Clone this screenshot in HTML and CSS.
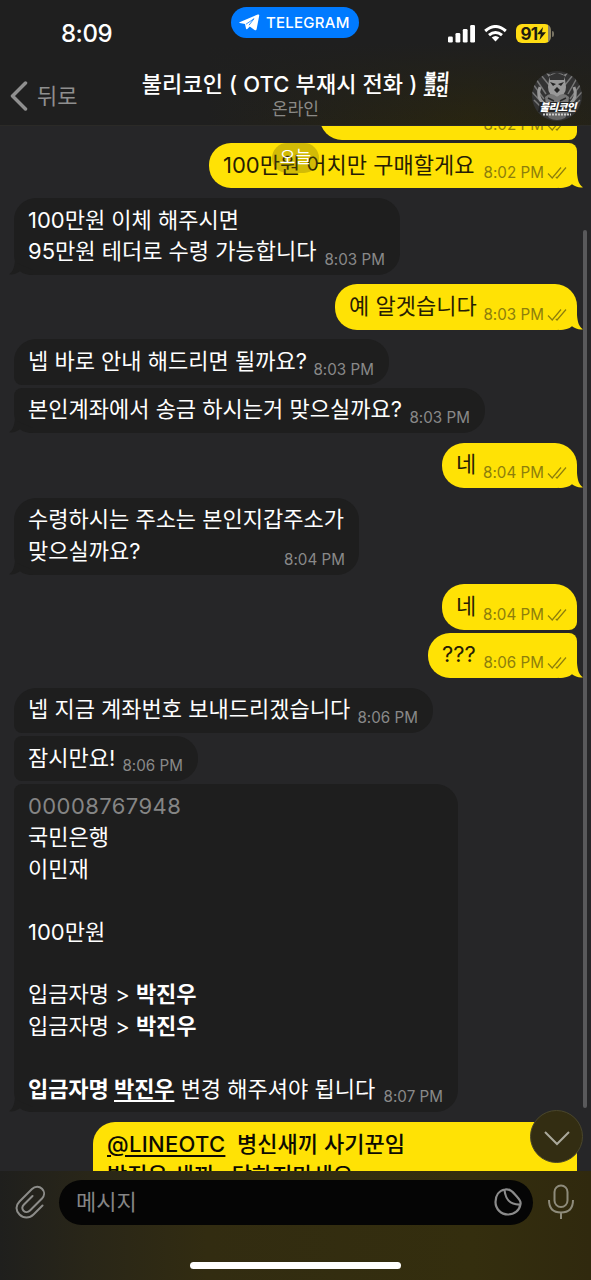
FILE: index.html
```html
<!DOCTYPE html>
<html lang="ko">
<head>
<meta charset="utf-8">
<title>불리코인</title>
<link rel="stylesheet" href="styles.css">
</head>
<body>
<svg width="0" height="0" class="defs">
  <defs>
    <symbol id="checks" viewBox="0 0 20 13"><path d="M1 7.5 5.2 12 14 1.5M8.8 10.8 10 12 19 1.5" fill="none" stroke="currentColor" stroke-width="1.2"/></symbol>
    <symbol id="tail" viewBox="0 0 24 22"><path d="M18 0V7C18.500 14 20 19 24 21.300C20 22 16 20.500 13 18.300C10 21 6 22 0 22V17L16 10V0Z" fill="currentColor"/></symbol>
  </defs>
</svg>
<div class="phone">
  <header class="header">
    <div class="status">
      <div class="clock">8:09</div>
      <div class="pill">
        <svg width="21" height="17" viewBox="0 0 21 17"><path d="M.5 8.200 18.800.500Q20.500 0 20.200 1.800L17.600 15.200Q17.200 17 15.500 15.900L10.800 12.400 8.300 15Q7.300 15.700 7 14.500L6 10 .8 9Q-.3 8.700.5 8.200Z" fill="#fff"/><path d="m7 10.200 8-5.500-5 6.500" fill="none" stroke="#007aff" stroke-width=".8"/></svg>
        <span>TELEGRAM</span>
      </div>
      <div class="indicators">
        <svg width="27" height="18" viewBox="0 0 27 18" fill="#fff"><rect x="0" y="11.500" width="4.800" height="6" rx="1.300"/><rect x="7.500" y="8" width="4.800" height="9.500" rx="1.300"/><rect x="14.800" y="4" width="4.800" height="13.500" rx="1.300"/><rect x="22.200" y="0" width="4.800" height="17.500" rx="1.300"/></svg>
        <svg width="23" height="17" viewBox="0 0 23 17" fill="none" stroke="#fff" stroke-width="3"><path d="M1.200 6Q11.500-3 21.800 6M5 10.200Q11.500 4.700 18 10.200"/><path d="M7.700 12.600Q11.500 9.500 15.300 12.600L11.500 16.600Z" fill="#fff" stroke="none"/></svg>
        <div class="battery"><span>91</span><svg width="9" height="13" viewBox="0 0 9 13"><path d="M6 0 0 7.200H3.800L2.500 13 9 5.300H5Z" fill="#1d1b10"/></svg></div>
      </div>
    </div>
    <div class="nav">
      <div class="back">
        <svg width="18" height="30" viewBox="0 0 18 30"><path d="M15.500 2 2.500 15 15.500 28" fill="none" stroke="#8f8f8f" stroke-width="3.500" stroke-linecap="round" stroke-linejoin="round"/></svg>
        <span>뒤로</span>
      </div>
      <div class="peer">
        <div class="name"><span>불리코인 ( OTC 부재시 전화 )</span><span class="brand">불리<br>코인</span></div>
        <div class="online">온라인</div>
      </div>
      <svg class="avatar" width="52" height="52" viewBox="0 0 52 52">
        <clipPath id="round"><circle cx="26" cy="26" r="25"/></clipPath>
        <g clip-path="url(#round)">
          <rect width="52" height="52" fill="#333"/>
          <g fill="none" stroke="#777" stroke-width="1.500"><path d="M2 14 13 29M5 9 15 24M50 14 39 29M46 8 37 24M1 22 12 34M51 22 40 34M10 5 18 15M42 5 34 15M3 30 10 37M49 30 42 37"/><path d="M9 17Q5 27 13 34M43 17Q47 27 39 34" stroke="#9a9a9a" stroke-width="3"/></g>
          <path d="M18 9Q19 2 26 4 33 2 34 9L35 17Q35 26 26 27 17 26 17 17Z" fill="#999"/>
          <path d="M18 7 15 3 20 5ZM34 7 37 3 32 5Z" fill="#888"/>
          <path d="M18 6Q26 1 34 6L33 10H19Z" fill="#333"/>
          <path d="M19 12 25 14 22 16ZM33 12 27 14 30 16ZM23 20 26 17 29 20 26 23Z" fill="#242424"/>
          <path d="M14 27Q20 21 26 27 32 21 38 27L37 35H15Z" fill="#777"/>
          <path d="M17 28 23 31M35 28 29 31" stroke="#292929" stroke-width="1.500"/>
          <path d="M9 32H43L46 42H7Z" fill="#222"/>
          <path d="M14 42H38L34 48Q26 52 18 48Z" fill="#666"/>
          <text class="avatar-name" x="27" y="41" text-anchor="middle" textLength="37">불리코인</text>
          <path d="M12 44.500H40" stroke="#ccc" stroke-width="2" stroke-dasharray="2 1"/>
        </g>
      </svg>
    </div>
  </header>

  <main class="chat">
    <div class="date">오늘</div>
    <div class="messages">
      <div class="msg out grouped w257"><span></span><time>8:02 PM<svg><use href="#checks"/></svg></time></div>
      <div class="msg out follow last w368"><span>100만원 어치만 구매할게요</span><time>8:02 PM<svg><use href="#checks"/></svg></time><svg class="tail"><use href="#tail"/></svg></div>
      <div class="msg in last w386"><span>100만원 이체 해주시면<br>95만원 테더로 수령 가능합니다</span><time>8:03 PM</time><svg class="tail"><use href="#tail"/></svg></div>
      <div class="msg out last w242"><span>예 알겟습니다</span><time>8:03 PM<svg><use href="#checks"/></svg></time><svg class="tail"><use href="#tail"/></svg></div>
      <div class="msg in grouped w375"><span>넵 바로 안내 해드리면 될까요?</span><time>8:03 PM</time></div>
      <div class="msg in follow last w471"><span>본인계좌에서 송금 하시는거 맞으실까요?</span><time>8:03 PM</time><svg class="tail"><use href="#tail"/></svg></div>
      <div class="msg out last w135"><span>네</span><time>8:04 PM<svg><use href="#checks"/></svg></time><svg class="tail"><use href="#tail"/></svg></div>
      <div class="msg in last w345"><span class="overlap">수령하시는 주소는 본인지갑주소가<br>맞으실까요?</span><time>8:04 PM</time><svg class="tail"><use href="#tail"/></svg></div>
      <div class="msg out grouped w135"><span>네</span><time>8:04 PM<svg><use href="#checks"/></svg></time></div>
      <div class="msg out follow last w149"><span>???</span><time>8:06 PM<svg><use href="#checks"/></svg></time><svg class="tail"><use href="#tail"/></svg></div>
      <div class="msg in grouped w419"><span>넵 지금 계좌번호 보내드리겠습니다</span><time>8:06 PM</time></div>
      <div class="msg in follow grouped w184"><span>잠시만요!</span><time>8:06 PM</time></div>
      <div class="msg in follow last w444"><span><span class="number">00008767948</span><br>국민은행<br>이민재<br><br>100만원<br><br>입금자명 &gt; <b>박진우</b><br>입금자명 &gt; <b>박진우</b><br><br><b>입금자명 <u>박진우</u></b> 변경 해주셔야 됩니다</span><time>8:07 PM</time><svg class="tail"><use href="#tail"/></svg></div>
      <div class="msg out w484"><span class="strong"><u class="handle">@LINEOTC</u>&nbsp; 병신새끼 사기꾼임<br>박진우 새끼&nbsp;&nbsp; 당하지마세요</span></div>
    </div>
    <div class="scrollbar"></div>
  </main>

  <footer class="footer">
    <button class="jump"><svg width="28" height="16" viewBox="0 0 28 16"><path d="M2 2 14 14 26 2" fill="none" stroke="#aaa89b" stroke-width="2"/></svg></button>
    <div class="composer">
      <svg width="30" height="34" viewBox="0 0 30 34"><path d="M27.500 20.500 18.500 29.500C14.500 33.500 8.500 33.500 4.500 29.500S.5 20.500 4.500 16.500L17 4C20 1 24.300 1 27 3.700S29.700 10.500 27 13.500L15 25.500C13 27.500 10.300 27.500 8.500 25.700S7 21.500 9 19.500L17.500 11" fill="none" stroke="#8c8c89" stroke-width="2" stroke-linecap="round"/></svg>
      <div class="field"><span>메시지</span>
        <svg width="28" height="28" viewBox="0 0 28 28" fill="none" stroke="#8b8b8b" stroke-width="2.200"><path d="M11 1.500C15 .5 18 3 21 6.500S27.500 13 26.500 16C25.500 22.500 20.500 26.500 14 26.500 7 26.500 1.500 21 1.500 14 1.500 7.500 5 2.500 11 1.500Z"/><path d="M10.500 2C11.500 11 15 17 26.500 16.500"/></svg>
      </div>
      <svg width="28" height="36" viewBox="0 0 28 36" fill="none" stroke="#8e8b7b" stroke-width="2"><rect x="7.500" y="1.500" width="13" height="21.500" rx="6.500"/><path d="M2 16C2 24 6 28.500 14 28.500S26 24 26 16M14 28.500V35"/></svg>
    </div>
    <div class="home"></div>
  </footer>
</div>
</body>
</html>
```

FILE: styles.css
```css
* { box-sizing: border-box; }
body { margin: 0; background: #262628; font-family: Inter, "Noto Sans CJK KR", sans-serif; }
.defs { position: absolute; }
.phone { width: 591px; height: 1280px; display: flex; flex-direction: column; overflow: hidden; }

.header { height: 126px; flex: none; background: linear-gradient(180deg, #1f1f1f 35%, rgba(31, 31, 31, 0)), linear-gradient(90deg, #1f1f1f 35%, #292510 80%, #242218); border-bottom: 1px solid #2b2a27; position: relative; z-index: 2; }
.status { height: 66px; display: grid; grid-template-columns: 231px 128px 1fr; }
.clock { padding: 19px 0 0 61px; font-size: 24px; line-height: 30px; font-weight: 500; color: #fff; letter-spacing: -.5px; }
.pill { margin-top: 7px; height: 31px; border-radius: 16px; background: #007aff; display: flex; align-items: center; gap: 6px; padding-left: 8px; color: #fff; font-size: 15px; font-weight: 500; letter-spacing: .25px; }
.pill span { padding-bottom: 1px; }
.indicators { display: flex; align-items: flex-start; padding: 25px 0 0 89px; gap: 9px; }
.indicators > svg { flex: none; }
.battery { position: relative; width: 35px; height: 19px; margin-top: -1px; border-radius: 6px; background: linear-gradient(90deg, #ffdc13 91%, #8b8265 91%); display: flex; align-items: center; justify-content: center; color: #1d1b10; font-size: 17px; font-weight: 700; letter-spacing: -.7px; }
.battery::after { content: ""; position: absolute; right: -3px; top: 7px; width: 2px; height: 6px; border-radius: 0 2px 2px 0; background: #777263; }
.nav { display: grid; grid-template-columns: 110px 371px 1fr; }
.back { display: flex; align-items: center; gap: 9px; padding-left: 10px; height: 60px; color: #8f8f8f; font-size: 22px; }
.back span { padding-bottom: 4px; }
.peer { display: flex; flex-direction: column; align-items: center; }
.name { display: flex; align-items: center; gap: 7px; height: 35px; color: #fff; font-size: 22px; line-height: 34px; font-weight: 500; white-space: nowrap; padding-top: 1px; }
.name span:first-child { letter-spacing: .1px; }
.brand { font-size: 13.500px; line-height: 12.500px; font-weight: 900; transform: skewX(-4deg); }
.online { color: #8b8a87; font-size: 17px; line-height: 16px; }
.avatar { margin: 4px 0 0 50px; }
.avatar-name { font: italic 900 10.5px "Noto Sans CJK KR", sans-serif; fill: #fff; }

.chat { height: 1045px; flex: none; position: relative; overflow: hidden; }
.messages { display: flex; flex-direction: column; padding: 0 14px; margin-top: -31.300px; }
.msg { position: relative; display: flex; justify-content: space-between; align-items: flex-end; flex: none; min-height: 45.400px; padding: 6.600px 15px 7.400px 14px; margin-bottom: 9.600px; border-radius: 22px; font-size: 22px; line-height: 31.400px; white-space: nowrap; }
.grouped { margin-bottom: 3px; }
.in { align-self: flex-start; background: #1e1e1e; color: #fff; border-radius: 22px 22px 22px 8px; }
.in.follow { border-top-left-radius: 8px; }
.out { align-self: flex-end; background: #ffe205; color: #271d04; padding-right: 10px; border-radius: 22px 22px 8px 22px; }
.out.follow { border-top-right-radius: 8px; }
.out.last { border-bottom-right-radius: 20px; }
.msg time { position: relative; z-index: 1; display: flex; align-items: center; font-size: 15.200px; line-height: 20px; height: 18px; letter-spacing: .02px; margin-bottom: -1.400px; color: #898989; }
.out time { color: #8d7e0c; }
.msg time svg { width: 20px; height: 13px; margin-left: 3px; margin-top: -1px; }
.msg .tail { position: absolute; width: 24px; height: 22px; right: -6px; bottom: 0; color: #ffe205; }
.in .tail { right: auto; left: -5px; color: #1e1e1e; transform: scaleX(-1); }
.in.last { border-bottom-left-radius: 20px; }
.overlap { margin-right: -60px; }
.number { color: #858585; letter-spacing: .42px; }
.handle { letter-spacing: .3px; }
.msg b { font-weight: 600; letter-spacing: -.1px; }
.strong { font-weight: 500; color: #0d0b02; }
u { text-decoration-thickness: 1.500px; text-underline-offset: 3px; }
.w135 { width: 135px; } .w149 { width: 149px; } .w184 { width: 184px; }
.w242 { width: 242px; } .w257 { width: 257px; } .w345 { width: 345px; }
.w368 { width: 368px; } .w375 { width: 375px; } .w386 { width: 386px; }
.w419 { width: 419px; } .w444 { width: 444px; } .w471 { width: 471px; }
.w484 { width: 484px; }
.date { position: absolute; z-index: 1; left: 272px; top: 17px; width: 47px; height: 30px; border-radius: 15px; background: rgba(105, 95, 10, .3); color: #fff; font-size: 17px; line-height: 28px; text-align: center; }
.scrollbar { position: absolute; right: 4px; top: 104px; width: 4px; height: 878px; border-radius: 2px; background: #59595b; }

.footer { position: relative; height: 109px; background: linear-gradient(90deg, #1f1f1d 0, #292618 15%, #322c11 35%, #342e0e 80%, #30290e); padding-top: 8px; }
.composer { display: grid; grid-template-columns: 30px 474px 28px; gap: 14px; padding-left: 15px; align-items: center; height: 46px; }
.composer > svg:first-child { margin-top: -1px; }
.composer > svg:last-child { margin-top: -1px; }
.field { height: 45px; border-radius: 23px; background: #050505; display: flex; align-items: center; justify-content: space-between; padding: 0 11px 1px 17px; color: #858585; font-size: 22px; }
.field span { padding-bottom: 3px; }
.jump { position: absolute; z-index: 2; left: 530px; top: -61px; width: 53px; height: 53px; border: 1px solid #4a462c; border-radius: 50%; background: #332d12; padding: 2px 0 0; display: flex; align-items: center; justify-content: center; }
.home { width: 211px; height: 7px; border-radius: 4px; background: #fff; margin: 37px auto 0; }
```
